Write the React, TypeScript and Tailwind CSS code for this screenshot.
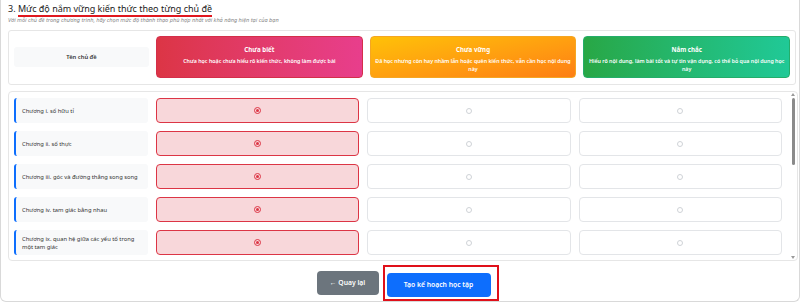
import { useState } from 'react'

const LEVELS = [
  {
    key: 'none',
    title: 'Chưa biết',
    desc: 'Chưa học hoặc chưa hiểu rõ kiến thức, không làm được bài',
    card: 'bg-gradient-to-r from-[#dc3545] to-[#e83e8c] border-[#d42f4a]',
  },
  {
    key: 'weak',
    title: 'Chưa vững',
    desc: 'Đã học nhưng còn hay nhầm lẫn hoặc quên kiến thức, vẫn cần học nội dung này',
    card: 'bg-gradient-to-br from-[#ffc107] to-[#fd7e14] border-[#f5a623]',
  },
  {
    key: 'good',
    title: 'Nắm chắc',
    desc: 'Hiểu rõ nội dung, làm bài tốt và tự tin vận dụng, có thể bỏ qua nội dung học này',
    card: 'bg-gradient-to-r from-[#28a745] to-[#20c997] border-[#24ad6a]',
  },
]

// chỉ các chủ đề đang thấy trong khung cuộn
const TOPICS = [
  'Chương i. số hữu tỉ',
  'Chương ii. số thực',
  'Chương iii. góc và đường thẳng song song',
  'Chương iv. tam giác bằng nhau',
  'Chương ix. quan hệ giữa các yếu tố trong một tam giác',
]

export default function App() {
  const [picked, setPicked] = useState<Record<string, string>>(
    Object.fromEntries(TOPICS.map(t => [t, 'none']))
  )

  return (
    <div className="w-[800px] h-[302px] bg-white border-x border-b border-[#d9d9d9] rounded-b-[6px] font-['Noto_Sans',sans-serif] text-[#212529]">
      <div className="pl-[7px] pt-[3px]">
        {/* Tiêu đề */}
        <div className="text-[9px] leading-[12px] text-[#222]">
          3. <span className="border-b-2 border-[#e0181f]">Mức độ nắm vững kiến thức theo từng chủ đề</span>
        </div>
        <div className="text-[5.6px] leading-[8px] italic text-[#888] mt-[1px]">
          Với mỗi chủ đề trong chương trình, hãy chọn mức độ thành thạo phù hợp nhất với khả năng hiện tại của bạn
        </div>

        {/* Hàng tiêu đề */}
        <div className="mt-[6px] w-[788px] border border-[#e6e6e6] rounded-[3px] p-[5px] pb-[6px]">
          <div className="grid grid-cols-[135px_1fr_1fr_1fr] gap-[7px] items-center">
            <div className="h-[20px] bg-[#f8f9fa] rounded-[3px] flex items-center justify-center text-[5.8px] font-semibold text-[#333]">
              Tên chủ đề
            </div>
            {LEVELS.map(l => (
              <div
                key={l.key}
                className={`h-[42px] rounded-[4px] border text-white text-center px-[2px] pt-[9px] ${l.card}`}
              >
                <div className="text-[6.2px] leading-[8px] font-bold">{l.title}</div>
                <div className="text-[5.3px] leading-[8px] font-semibold mt-[3px]">{l.desc}</div>
              </div>
            ))}
          </div>
        </div>

        {/* Danh sách chủ đề */}
        <div className="mt-[6px] w-[790px] h-[170px] border border-[#e6e6e6] rounded-[4px] flex">
          <div className="flex-1 overflow-hidden pl-[5px] pr-[8px] py-[6px]">
            <div className="flex flex-col gap-[8px]">
              {TOPICS.map(t => (
                <div key={t} className="grid grid-cols-[134px_1fr_1fr_1fr] gap-[8px] h-[25px] shrink-0">
                  <div className="bg-[#f8f9fa] border-l-2 border-[#0d6efd] rounded-[3px] flex items-center pl-[6px] pr-[8px] text-[5.8px] leading-[8px] text-[#333]">
                    {t}
                  </div>
                  {LEVELS.map(l => {
                    const on = picked[t] === l.key
                    return (
                      <button
                        key={l.key}
                        onClick={() => setPicked({ ...picked, [t]: l.key })}
                        className={`rounded-[4px] border flex items-center justify-center ${
                          on ? 'bg-[#f8d7da] border-[#dc3545]' : 'bg-white border-[#e3e5e8]'
                        }`}
                      >
                        {on ? (
                          <span className="w-[7px] h-[7px] rounded-full border border-[#dc3545] flex items-center justify-center">
                            <span className="w-[3px] h-[3px] rounded-full bg-[#dc3545]" />
                          </span>
                        ) : (
                          <span className="w-[6px] h-[6px] rounded-full border border-[#cfd3d7]" />
                        )}
                      </button>
                    )
                  })}
                </div>
              ))}
            </div>
          </div>
          {/* thanh cuộn */}
          <div className="w-[6px] mr-[1px] flex flex-col items-center py-[1px]">
            <svg width="4" height="3" viewBox="0 0 4 3"><path d="M2 0 L4 3 L0 3 Z" fill="#9a9a9a" /></svg>
            <div className="w-[3px] h-[67px] mt-[2px] rounded-full bg-[#8a8a8a]" />
            <div className="flex-1" />
            <svg width="4" height="3" viewBox="0 0 4 3"><path d="M0 0 L4 0 L2 3 Z" fill="#9a9a9a" /></svg>
          </div>
        </div>

        {/* Nút */}
        <div className="flex justify-center items-center gap-[4px] mt-[4px] pl-[8px]">
          <button className="h-[24px] w-[62px] rounded-[4px] bg-[#6c757d] text-white text-[6.8px] font-semibold">
            ← Quay lại
          </button>
          <div className="border-2 border-[#e0101a] pl-[2px] pr-[6px] py-[2px]">
            <button className="h-[24px] w-[104px] rounded-[4px] bg-[#0d6efd] text-white text-[6.8px] font-semibold">
              Tạo kế hoạch học tập
            </button>
          </div>
        </div>
      </div>
    </div>
  )
}
